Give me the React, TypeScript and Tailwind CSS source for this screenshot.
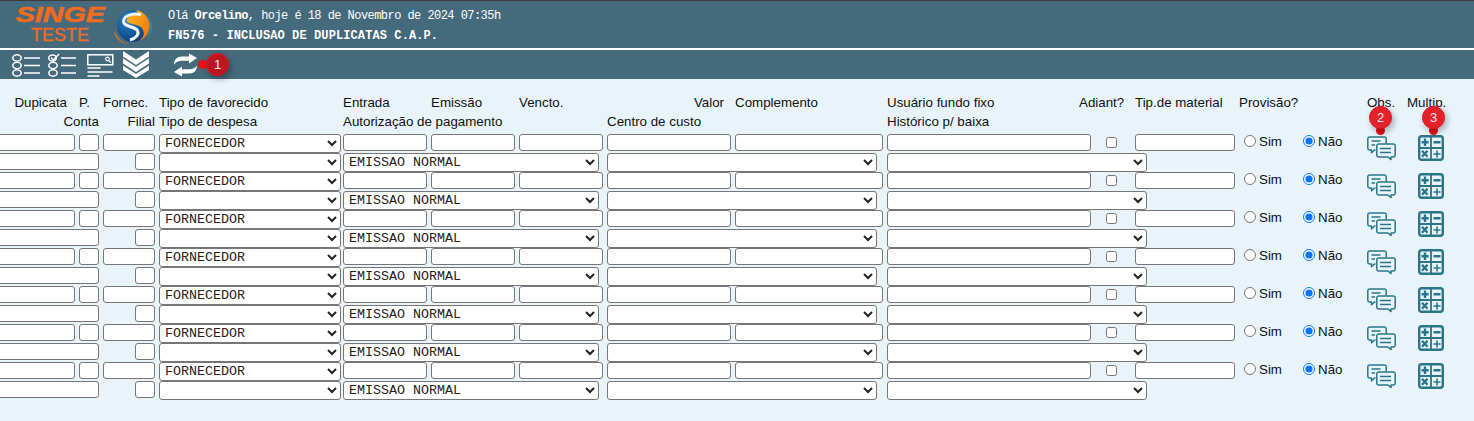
import React from "react";

const inputCls = "block h-[17px] border border-[#767676] rounded-[3px] bg-white";
const selectCls = "block h-[19px] border border-[#767676] rounded-[3px] bg-white text-[13.33px] text-[#222] font-['Liberation_Mono',monospace] pl-[1px]";
const gridCls = "grid grid-cols-[95px_20px_52px_180px_84px_84px_84px_124px_148px_204px_36px_100px_124px_36px_53px] gap-x-[4px]";

function ListIcon() {
  return (
    <svg width="29" height="25" viewBox="0 0 29 25" fill="none" stroke="white" strokeWidth="1.5">
      <ellipse cx="5" cy="6" rx="4.2" ry="3.2" />
      <ellipse cx="5" cy="13.5" rx="4.2" ry="3.2" />
      <ellipse cx="5" cy="21" rx="4.2" ry="3.2" />
      <path d="M12 6h16M12 13.5h16M12 21h16" />
    </svg>
  );
}
function CheckListIcon() {
  return (
    <svg width="29" height="25" viewBox="0 0 29 25" fill="none" stroke="white" strokeWidth="1.5">
      <ellipse cx="4.5" cy="6" rx="3.8" ry="3" />
      <path d="M3 5.5l2.5 2.5 5.5-6" />
      <ellipse cx="5" cy="13.5" rx="4.2" ry="3.2" />
      <ellipse cx="5" cy="21" rx="4.2" ry="3.2" />
      <path d="M13 6h15M13 13.5h15M13 21h15" />
    </svg>
  );
}
function SearchFormIcon() {
  return (
    <svg width="27" height="25" viewBox="0 0 27 25" fill="none" stroke="white">
      <rect x="0.8" y="2.8" width="25" height="10" strokeWidth="1.5" />
      <circle cx="20.5" cy="7" r="1.8" strokeWidth="1.2" />
      <path d="M22 8.6l2 2" strokeWidth="1.2" />
      <path d="M0.5 16h13M0.5 20h25M0.5 24h12" strokeWidth="1.6" />
    </svg>
  );
}
function ChevronsIcon() {
  return (
    <svg width="26" height="27" viewBox="0 0 26 27" fill="white">
      <path d="M0 0l13 8.5L26 0v5.5L13 14 0 5.5z" />
      <path d="M0 7.2l13 8.5 13-8.5v5.3L13 21 0 12.5z" />
      <path d="M0 14.4l13 8.5 13-8.5v4.6L13 27 0 19z" />
    </svg>
  );
}
function RefreshIcon() {
  return (
    <svg width="25" height="24" viewBox="0 0 25 24" fill="white">
      <path d="M1 11.5C1 6.5 4 3.5 9 3.5h7V0.5l8 4.6-8 5.4V7.7H9.5C5 7.7 3 9 1 11.5z" />
      <path d="M24 12.5c0 5-3 8-8 8H9v3L1 18.9l8-5.4v2.8h6.5c4.5 0 6.5-1.3 8.5-3.8z" />
    </svg>
  );
}
function ChatIcon() {
  return (
    <svg width="29" height="25" viewBox="0 0 29 25" fill="none" stroke="#2a7688" strokeWidth="1.5" strokeLinejoin="round">
      <path d="M8.5 14H7.5l-3 2.8V14H2.5A1.8 1.8 0 0 1 .8 12.2V2.8A1.8 1.8 0 0 1 2.5 1h15a1.8 1.8 0 0 1 1.7 1.8V7.5" />
      <path d="M11.5 8h15a1.8 1.8 0 0 1 1.7 1.8v9.4a1.8 1.8 0 0 1-1.7 1.8H24v2.6L21 21h-9.5a1.8 1.8 0 0 1-1.7-1.8V9.8A1.8 1.8 0 0 1 11.5 8z" />
      <path d="M4.5 5h9M4.5 9H8M13 12.5h11M13 16.5h11" />
    </svg>
  );
}
function CalcIcon() {
  return (
    <svg width="26" height="26" viewBox="0 0 26 26">
      <rect x="1.2" y="1.2" width="23.6" height="23.6" rx="2.5" fill="none" stroke="#2a7688" strokeWidth="2.4" />
      <path d="M13 1v24M1 13h24" stroke="#2a7688" strokeWidth="1.8" />
      <path d="M7 3.5v7.5M3.5 7.2h7.2M15.500 7.2h7M4 15.8l5.500 6M9.500 15.800l-5.500 6" stroke="#2a7688" strokeWidth="2.4" />
      <path d="M19 15.500v7M15.500 19h7" stroke="#2a7688" strokeWidth="1.6" />
    </svg>
  );
}
function LogoMark() {
  return (
    <svg width="40" height="36" viewBox="0 0 40 36">
      <defs>
        <radialGradient id="ball" cx="0.35" cy="0.3" r="0.8">
          <stop offset="0" stopColor="#2a86c8" />
          <stop offset="0.7" stopColor="#0e4f8e" />
          <stop offset="1" stopColor="#0a3a70" />
        </radialGradient>
        <linearGradient id="sg" x1="0" y1="0" x2="1" y2="1">
          <stop offset="0" stopColor="#ffb81a" />
          <stop offset="1" stopColor="#ee6f12" />
        </linearGradient>
      </defs>
      <path d="M2 25c2 5 7 9 13 10C8 35 1 30 0 22z" fill="#d9791f" />
      <path d="M30 4c5 3 8 8 8 14 0 5-2 9-5 12 2-4 3-8 3-12 0-6-2-10-6-14z" fill="#2f86a8" />
      <circle cx="19" cy="17" r="16" fill="url(#ball)" />
      <path d="M21 1a16 16 0 0 1 4 31c4-3 6-7 4-11-2-5-8-5-14-7-3-1-3-3-1-5 3-3 7-4 10-4 0-2-1-3-3-4z" fill="url(#sg)" />
      <path d="M27 5.500C20 4 10 6 9.500 12c-.3 6 10 5 13.500 9 3 4-1 8.500-7 10" fill="none" stroke="#f4f4f4" strokeWidth="3" />
    </svg>
  );
}
function Badge({ n, className, dot, fill }: { n: number; className: string; dot: string; fill: string }) {
  return (
    <div className={"absolute " + className}>
      <div className={"absolute w-[9px] h-[9px] rounded-full bg-[#ea1019] " + dot} />
      <div className={"absolute left-0 top-0 w-[23px] h-[23px] rounded-full border border-[#ea1019] shadow-[2px_3px_6px_rgba(0,0,0,0.3)] text-[#fbeaea] text-[13px] flex items-center justify-center font-['Liberation_Sans',sans-serif] " + fill}>
        {n}
      </div>
    </div>
  );
}

function Row() {
  return (
    <>
      {/* first line */}
      <input className={inputCls + " w-full"} readOnly />
      <input className={inputCls + " w-full"} readOnly />
      <input className={inputCls + " w-full"} readOnly />
      <select className={selectCls + " w-[182px]"} defaultValue="F">
        <option value="F">FORNECEDOR</option>
      </select>
      <input className={inputCls + " w-full"} readOnly />
      <input className={inputCls + " w-full"} readOnly />
      <input className={inputCls + " w-full"} readOnly />
      <input className={inputCls + " w-full"} readOnly />
      <input className={inputCls + " w-full"} readOnly />
      <input className={inputCls + " w-full"} readOnly />
      <div className="h-[19px] pl-[11px] pt-[3px]">
        <input type="checkbox" className="block w-[11px] h-[11px] m-0" />
      </div>
      <input className={inputCls + " w-full"} readOnly />
      <div className="flex items-start h-[19px] -mt-[2px] text-[13.33px] leading-[19px]">
        <label className="flex items-center w-[64px] pl-[5px]">
          <input type="radio" className="w-[12px] h-[12px] m-0 -mt-[2px]" />
          <span className="ml-[3px]">Sim</span>
        </label>
        <label className="flex items-center">
          <input type="radio" defaultChecked className="w-[12px] h-[12px] m-0 -mt-[2px]" />
          <span className="ml-[3px]">Não</span>
        </label>
      </div>
      <div className="row-span-2 pt-[2px]">
        <ChatIcon />
      </div>
      <div className="row-span-2 pl-[11px] pt-[1px]">
        <CalcIcon />
      </div>
      {/* second line */}
      <input className={inputCls + " col-span-2 w-full"} readOnly />
      <div className="flex justify-end">
        <input className={inputCls + " w-[20px]"} readOnly />
      </div>
      <select className={selectCls + " w-[182px]"} defaultValue="">
        <option value=""></option>
      </select>
      <select className={selectCls + " col-span-3 w-[256px]"} defaultValue="E">
        <option value="E">EMISSAO NORMAL</option>
      </select>
      <select className={selectCls + " col-span-2 w-[270px]"} defaultValue="">
        <option value=""></option>
      </select>
      <select className={selectCls + " col-span-3 w-[260px]"} defaultValue="">
        <option value=""></option>
      </select>
      <div />
    </>
  );
}

export default function App() {
  return (
    <div className="relative w-[1474px] h-[421px] overflow-hidden bg-[#e8f4fa] font-['Liberation_Sans',sans-serif] text-[13.33px] text-[#111]">
      <header className="h-[79px] bg-[#456a7c] text-white">
        <div className="h-[48px] border-t-[1px] border-[#3d3d3d] flex">
          <div className="w-[114px] flex flex-col items-center pt-[4px] pl-[6px] text-[#f26a1b]">
            <div className="italic font-bold text-[22px] leading-[20px] [transform:scaleX(1.3)] [-webkit-text-stroke:0.5px_#f26a1b]">SINGE</div>
            <div className="text-[18px] leading-[17px] mt-[2px] [-webkit-text-stroke:0.3px_#f26a1b]">TESTE</div>
          </div>
          <div className="pt-[8px]">
            <LogoMark />
          </div>
          <div className="ml-[14px] pt-[6px] font-['Liberation_Mono',monospace] text-[12px]">
            <div className="h-[20px] leading-[18px] tracking-[-0.55px]">
              Olá <b>Orcelino</b>, hoje é 18 de Novembro de 2024 07:35h
            </div>
            <div className="leading-[18px] font-bold tracking-[0.1px]">FN576 - INCLUSAO DE DUPLICATAS C.A.P.</div>
          </div>
        </div>
        <div className="h-[2px] bg-white" />
        <div className="h-[29px] flex items-center pl-[12px]">
          <ListIcon />
          <div className="ml-[7px]"><CheckListIcon /></div>
          <div className="ml-[10px]"><SearchFormIcon /></div>
          <div className="ml-[9px]"><ChevronsIcon /></div>
          <div className="ml-[24px]"><RefreshIcon /></div>
        </div>
      </header>

      <main className="pt-[14px] -ml-[20px] w-[1494px]">
        <div className={gridCls + " auto-rows-[19px] leading-[19px]"}>
          <div className="text-right pr-[8px]">Dupicata</div>
          <div className="whitespace-nowrap">P.</div>
          <div>Fornec.</div>
          <div className="whitespace-nowrap">Tipo de favorecido</div>
          <div>Entrada</div>
          <div>Emissão</div>
          <div>Vencto.</div>
          <div className="text-right pr-[7px]">Valor</div>
          <div>Complemento</div>
          <div>Usuário fundo fixo</div>
          <div className="whitespace-nowrap -ml-[16px]">Adiant?</div>
          <div className="whitespace-nowrap">Tip.de material</div>
          <div>Provisão?</div>
          <div>Obs.</div>
          <div>Multip.</div>

          <div className="col-span-2 text-right">Conta</div>
          <div className="text-right">Filial</div>
          <div>Tipo de despesa</div>
          <div className="col-span-3">Autorização de pagamento</div>
          <div className="col-span-2">Centro de custo</div>
          <div className="col-span-3">Histórico p/ baixa</div>
          <div />
        </div>
        <div className={gridCls + " auto-rows-[19px] mt-[3px]"}>
          {Array.from({ length: 7 }).map((_, i) => (
            <Row key={i} />
          ))}
        </div>
      </main>

      <Badge n={1} fill="bg-[#bd1620]" className="left-[206px] top-[53px] w-[23px] h-[23px]" dot="-left-[8px] top-[7px]" />
      <Badge n={2} fill="bg-[#e3222c]" className="left-[1369px] top-[106px] w-[23px] h-[23px]" dot="left-[7px] top-[20px]" />
      <Badge n={3} fill="bg-[#e3222c]" className="left-[1422px] top-[106px] w-[23px] h-[23px]" dot="left-[7px] top-[20px]" />
    </div>
  );
}
